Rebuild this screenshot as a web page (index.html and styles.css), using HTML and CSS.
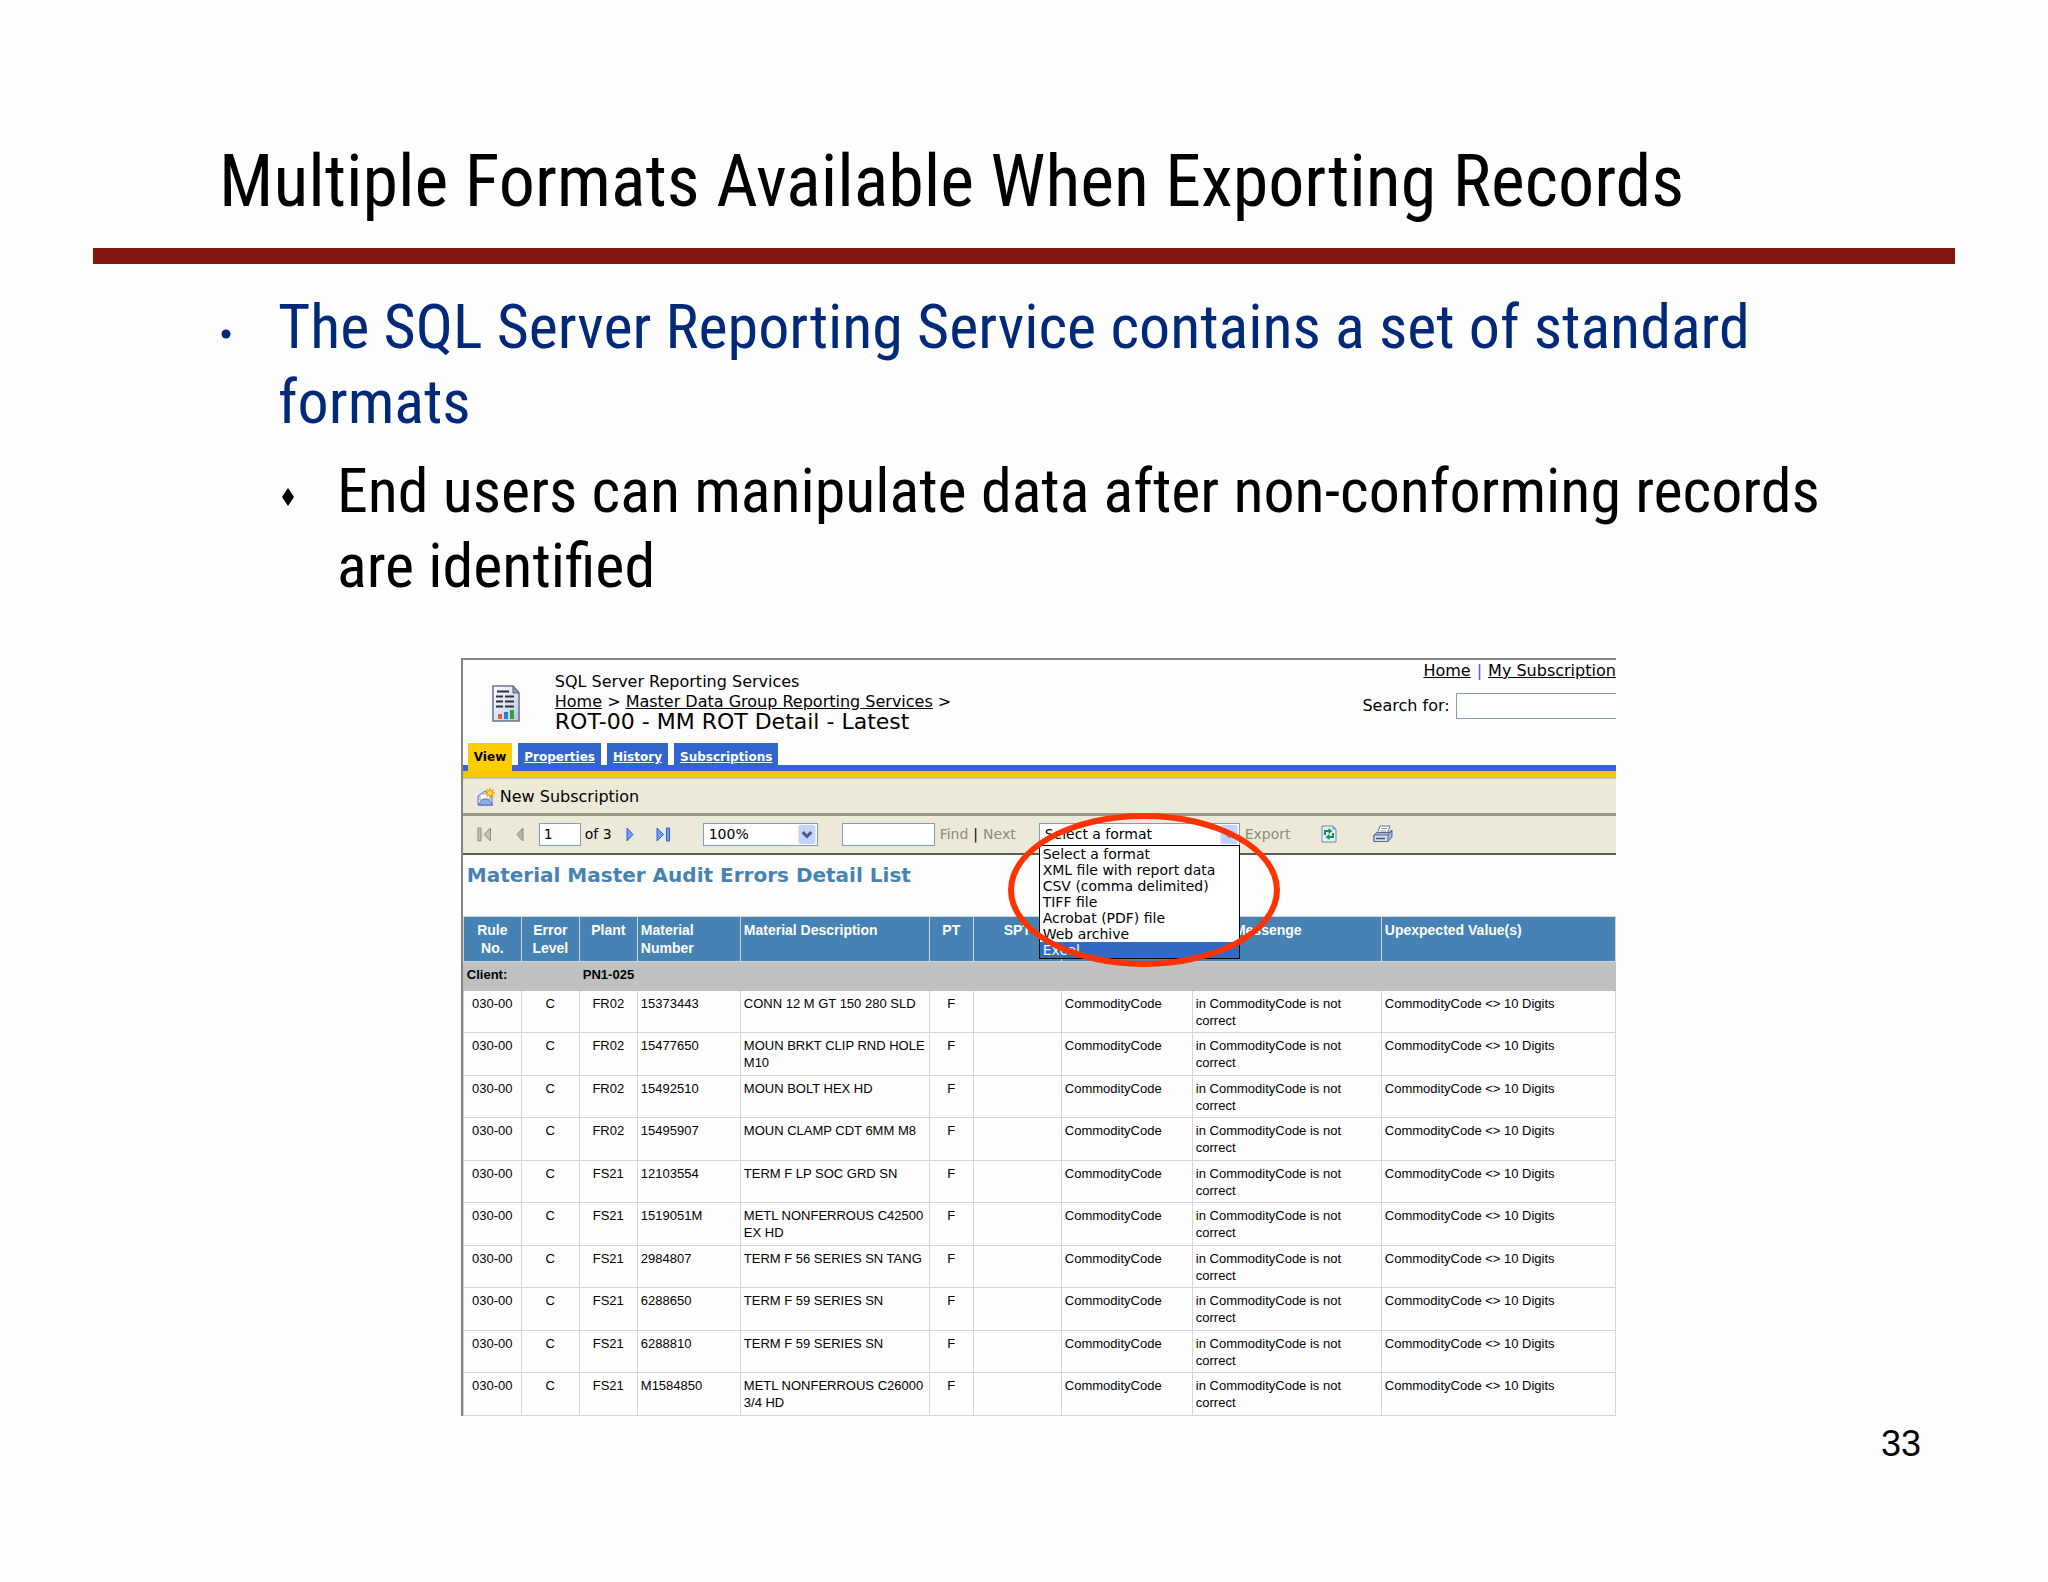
FILE: index.html
```
<!DOCTYPE html>
<html lang="en">
  <head>
    <meta charset="UTF-8" />
    <meta name="viewport" content="width=device-width, initial-scale=1.0" />
    <title>Multiple Formats Available When Exporting Records</title>
    <link rel="stylesheet" href="styles.css">
  </head>
  <body>
    <main class="slide">
      <h1 class="slide-title">Multiple Formats Available When Exporting Records</h1>
      <hr class="rule" />

      <ul class="points">
        <li class="point">
          <svg class="bullet" viewBox="0 0 12 18"><ellipse cx="6" cy="10" rx="4.500" ry="4.500" fill="#00297a" /></svg>
          <p>The SQL Server Reporting Service contains a set of standard formats</p>
        </li>
        <li class="point sub-point">
          <svg class="bullet" viewBox="0 0 12 18"><path d="M6 0L12 9L6 18L0 9Z" /></svg>
          <p>End users can manipulate data after non-conforming records are identified</p>
        </li>
      </ul>

      <section class="report">
        <header class="report-header">
          <svg class="report-icon" viewBox="0 0 28 37">
            <defs>
              <linearGradient id="page" x1="0" y1="0" x2="1" y2="1">
                <stop offset="0" stop-color="#fff" />
                <stop offset="1" stop-color="#b9c6e6" />
              </linearGradient>
            </defs>
            <path d="M1 1H21L27 8V36H1Z" fill="url(#page)" stroke="#6b7690" stroke-width="1.6" />
            <path d="M21 1V8H27Z" fill="#8d99b5" stroke="#59637c" />
            <path d="M5 6.500H17M4 11.500H11M13 11.500H22M4 16.500H11M13 16.500H22M4 21.500H11M13 21.500H22" stroke="#2b2f3a" stroke-width="2" />
            <path d="M6 29H10V34H6Z" fill="#e8622c" />
            <path d="M12 27H16V34H12Z" fill="#2a7fe0" />
            <path d="M18 25H22V34H18Z" fill="#2fa52f" />
          </svg>
          <div class="crumbs">
            <p>SQL Server Reporting Services</p>
            <p><a href="#">Home</a> &gt; <a href="#">Master Data Group Reporting Services</a> &gt;</p>
            <h2>ROT-00 - MM ROT Detail - Latest</h2>
          </div>
          <div class="header-side">
            <p class="header-links"><a href="#">Home</a><span class="bar">|</span><a href="#">My Subscription</a></p>
            <div class="search">
              <label for="search">Search for:</label>
              <input type="text" id="search" />
            </div>
          </div>
        </header>

        <nav class="tabs">
          <a href="#" class="tab active">View</a>
          <a href="#" class="tab">Properties</a>
          <a href="#" class="tab">History</a>
          <a href="#" class="tab">Subscriptions</a>
        </nav>

        <div class="action-bar">
          <button class="new-btn">
            <svg class="mail-icon" viewBox="0 0 18 18">
              <path d="M1 8L8 3L15 8V17H1Z" fill="#dbe8fa" stroke="#4a72b8" />
              <path d="M3 6H13V12H3Z" fill="#fff" stroke="#8da8d4" />
              <path d="M1 17L6 11H11L16 17Z" fill="#8db0e8" stroke="#4a72b8" />
              <path d="M13 0V10M8 5H18M9.500 1.500L16.500 8.500M16.500 1.500L9.500 8.500" stroke="#f5a300" stroke-width="1.600" />
              <circle cx="13" cy="5" r="2.500" fill="#ffe05a" stroke="#f5a300" />
            </svg>
            New Subscription
          </button>
        </div>

        <div class="toolbar">
          <div class="pager">
            <button aria-label="First page">
              <svg width="15" height="16" viewBox="0 0 15 16"><path d="M1 2H4V15H1ZM13.500 2V15L7 8.500Z" fill="#c2c2ba" stroke="#8a8a84" /></svg>
            </button>
            <button aria-label="Previous page">
              <svg width="8" height="16" viewBox="0 0 8 16"><path d="M7 2V15L1 8.500Z" fill="#b5b5ae" stroke="#8a8a84" /></svg>
            </button>
          </div>
          <div class="page-count">
            <input type="text" id="page-no" class="page-no" value="1" />
            <label for="page-no">of 3</label>
          </div>
          <div class="pager next">
            <button aria-label="Next page">
              <svg width="8" height="16" viewBox="0 0 8 16"><path d="M1 2V15L7 8.500Z" fill="#6da0f5" stroke="#2f62d0" /></svg>
            </button>
            <button aria-label="Last page">
              <svg width="15" height="16" viewBox="0 0 15 16"><path d="M1 2V15L7.500 8.500ZM10.500 2H13.500V15H10.500Z" fill="#6da0f5" stroke="#2f62d0" /></svg>
            </button>
          </div>
          <div class="drop zoom">
            <select aria-label="Zoom"><option>100%</option></select>
            <svg class="arrow" viewBox="0 0 18 20"><rect width="18" height="20" rx="2" fill="#c3d3fb" /><path d="M4.500 7.500L9 12L13.500 7.500" fill="none" stroke="#44597f" stroke-width="3" /></svg>
          </div>
          <div class="find">
            <input type="text" aria-label="Find text" />
            <button>Find</button>
            <span>|</span>
            <button>Next</button>
          </div>
          <div class="drop format">
            <select aria-label="Export format"><option>Select a format</option></select>
            <svg class="arrow" viewBox="0 0 18 20"><rect width="18" height="20" rx="2" fill="#c3d3fb" /><path d="M4.500 7.500L9 12L13.500 7.500" fill="none" stroke="#8497c4" stroke-width="3" /></svg>
            <ul class="menu">
              <li>Select a format</li>
              <li>XML file with report data</li>
              <li>CSV (comma delimited)</li>
              <li>TIFF file</li>
              <li>Acrobat (PDF) file</li>
              <li>Web archive</li>
              <li class="selected">Excel</li>
            </ul>
            <div class="ring"></div>
          </div>
          <button class="export">Export</button>
          <div class="tools">
            <button aria-label="Refresh">
              <svg width="16" height="18" viewBox="0 0 16 18">
                <path d="M1 1H12L15 4V17H1Z" fill="#e6eefb" stroke="#6b86b8" />
                <path d="M12 1V4H15" fill="none" stroke="#6b86b8" />
                <path d="M4 10V6H8M12 8V12H8" fill="none" stroke="#159447" stroke-width="2" />
                <path d="M7.500 3L11.500 6L7.500 9ZM8.500 9L4.500 12L8.500 15Z" fill="#159447" />
              </svg>
            </button>
            <button aria-label="Print">
              <svg width="20" height="18" viewBox="0 0 20 18">
                <path d="M7 1H17L14 9H4Z" fill="#fff" stroke="#66759c" />
                <path d="M8.500 3.500H14M7.500 6H13" stroke="#8795b8" />
                <path d="M1 10L4 7.500H16L19 5V12L15 16.500H1Z" fill="#a9b6d6" stroke="#55648c" />
                <path d="M1 10H15V16.500H1ZM15 10L19 6" fill="#d5ddf0" stroke="#55648c" />
                <path d="M3 13.500H12" stroke="#46547c" stroke-width="1.500" />
              </svg>
            </button>
          </div>
        </div>

        <h3 class="report-title">Material Master Audit Errors Detail List</h3>

        <table class="errors">
          <colgroup>
            <col class="w-small" /><col class="w-small" /><col class="w-small" />
            <col class="w-number" /><col class="w-desc" /><col class="w-pt" />
            <col class="w-spt" /><col class="w-field" /><col class="w-desc" /><col />
          </colgroup>
          <thead>
            <tr>
              <th class="mid">Rule<br />No.</th>
              <th class="mid">Error<br />Level</th>
              <th class="mid">Plant</th>
              <th>Material<br />Number</th>
              <th>Material Description</th>
              <th class="mid">PT</th>
              <th class="mid">SPT</th>
              <th></th>
              <th>Error Messenge</th>
              <th>Upexpected Value(s)</th>
            </tr>
          </thead>
          <tbody>
            <tr class="client">
              <td colspan="2">Client:</td>
              <td colspan="8">PN1-025</td>
            </tr>
            <tr>
              <td class="mid">030-00</td><td class="mid">C</td><td class="mid">FR02</td>
              <td>15373443</td><td>CONN 12 M GT 150 280 SLD</td><td class="mid">F</td><td></td>
              <td>CommodityCode</td><td>in CommodityCode is not correct</td><td>CommodityCode &lt;&gt; 10 Digits</td>
            </tr>
            <tr>
              <td class="mid">030-00</td><td class="mid">C</td><td class="mid">FR02</td>
              <td>15477650</td><td>MOUN BRKT CLIP RND HOLE M10</td><td class="mid">F</td><td></td>
              <td>CommodityCode</td><td>in CommodityCode is not correct</td><td>CommodityCode &lt;&gt; 10 Digits</td>
            </tr>
            <tr>
              <td class="mid">030-00</td><td class="mid">C</td><td class="mid">FR02</td>
              <td>15492510</td><td>MOUN BOLT HEX HD</td><td class="mid">F</td><td></td>
              <td>CommodityCode</td><td>in CommodityCode is not correct</td><td>CommodityCode &lt;&gt; 10 Digits</td>
            </tr>
            <tr>
              <td class="mid">030-00</td><td class="mid">C</td><td class="mid">FR02</td>
              <td>15495907</td><td>MOUN CLAMP CDT 6MM M8</td><td class="mid">F</td><td></td>
              <td>CommodityCode</td><td>in CommodityCode is not correct</td><td>CommodityCode &lt;&gt; 10 Digits</td>
            </tr>
            <tr>
              <td class="mid">030-00</td><td class="mid">C</td><td class="mid">FS21</td>
              <td>12103554</td><td>TERM F LP SOC GRD SN</td><td class="mid">F</td><td></td>
              <td>CommodityCode</td><td>in CommodityCode is not correct</td><td>CommodityCode &lt;&gt; 10 Digits</td>
            </tr>
            <tr>
              <td class="mid">030-00</td><td class="mid">C</td><td class="mid">FS21</td>
              <td>1519051M</td><td>METL NONFERROUS C42500 EX HD</td><td class="mid">F</td><td></td>
              <td>CommodityCode</td><td>in CommodityCode is not correct</td><td>CommodityCode &lt;&gt; 10 Digits</td>
            </tr>
            <tr>
              <td class="mid">030-00</td><td class="mid">C</td><td class="mid">FS21</td>
              <td>2984807</td><td>TERM F 56 SERIES SN TANG</td><td class="mid">F</td><td></td>
              <td>CommodityCode</td><td>in CommodityCode is not correct</td><td>CommodityCode &lt;&gt; 10 Digits</td>
            </tr>
            <tr>
              <td class="mid">030-00</td><td class="mid">C</td><td class="mid">FS21</td>
              <td>6288650</td><td>TERM F 59 SERIES SN</td><td class="mid">F</td><td></td>
              <td>CommodityCode</td><td>in CommodityCode is not correct</td><td>CommodityCode &lt;&gt; 10 Digits</td>
            </tr>
            <tr>
              <td class="mid">030-00</td><td class="mid">C</td><td class="mid">FS21</td>
              <td>6288810</td><td>TERM F 59 SERIES SN</td><td class="mid">F</td><td></td>
              <td>CommodityCode</td><td>in CommodityCode is not correct</td><td>CommodityCode &lt;&gt; 10 Digits</td>
            </tr>
            <tr>
              <td class="mid">030-00</td><td class="mid">C</td><td class="mid">FS21</td>
              <td>M1584850</td><td>METL NONFERROUS C26000 3/4 HD</td><td class="mid">F</td><td></td>
              <td>CommodityCode</td><td>in CommodityCode is not correct</td><td>CommodityCode &lt;&gt; 10 Digits</td>
            </tr>
          </tbody>
        </table>
      </section>

      <footer class="page-number">33</footer>
    </main>
  </body>
</html>
```
FILE: styles.css
```
* {
  box-sizing: border-box;
}
body {
  margin: 0;
  background-color: #fefefe;
  color: #000;
  font-family: "Liberation Sans", Arial, sans-serif;
}
h1, h2, h3, p, ul {
  margin: 0;
  padding: 0;
  font-weight: normal;
}
ul {
  list-style: none;
}
a {
  color: inherit;
}
button {
  padding: 0;
  border: none;
  background: none;
  font: inherit;
  color: inherit;
  cursor: pointer;
}
svg {
  display: block;
  flex: none;
}

/* slide */
.slide {
  padding-top: 140px;
}
.slide-title {
  margin-left: 219px;
  font-family: "Roboto Condensed", "Arial Narrow", sans-serif;
  font-size: 72px;
  line-height: 84px;
}
.rule {
  height: 16px;
  margin: 24px 93px 25px;
  border: none;
  background-color: #84160d;
}
.points {
  display: flex;
  flex-direction: column;
  gap: 14px;
  margin: 0 200px 0 220px;
  font-family: "Roboto Condensed", "Arial Narrow", sans-serif;
  font-size: 62px;
  line-height: 75px;
}
.point {
  display: flex;
  gap: 46px;
  color: #00297a;
}
.sub-point {
  margin-left: 62px;
  gap: 43px;
  color: #000;
}
.bullet {
  width: 12px;
  height: 18px;
  margin-top: 35px;
}

/* report window */
.report {
  margin: 55px 21.1% 0 22.5%;
  border-top: 2px solid #848484;
  border-left: 2px solid #848484;
  font-family: "DejaVu Sans", Verdana, sans-serif;
  font-size: 16px;
  line-height: 20px;
}
.report-header {
  display: flex;
  height: 83px;
  padding-left: 29px;
}
.report-icon {
  width: 28px;
  height: 37px;
  margin-top: 25px;
}
.crumbs {
  flex: 1;
  padding: 12px 0 0 35px;
}
.crumbs h2 {
  font-size: 22px;
}
.header-side {
  display: flex;
  flex-direction: column;
  gap: 12px;
  padding-top: 1px;
}
.header-links {
  padding-left: 61px;
}
.bar {
  margin: 0 6px;
  color: #3366cc;
}
.search {
  display: flex;
  align-items: center;
  gap: 6px;
}
.search input {
  flex: 1;
  width: 100px;
  height: 26px;
  border: 1px solid #7f9db9;
  border-right: none;
  background: #fff;
}
.tabs {
  display: flex;
  gap: 6px;
  height: 28px;
  padding-left: 5px;
  border-bottom: 6px solid #3366cc;
}
.tab {
  height: 22px;
  padding: 4px 6px 0;
  background-color: #3366cc;
  color: #fff;
  font-size: 12px;
  font-weight: bold;
}
.tab.active {
  height: 28px;
  background-color: #ffcc00;
  color: #000;
  text-decoration: none;
}
.action-bar {
  height: 45px;
  padding: 10px 14px 0;
  border-top: 6px solid #f5c60c;
  border-bottom: 3px solid #9a988b;
  background-color: #ece9d8;
  box-shadow: inset 0 2px #c4bfa8;
}
.new-btn {
  display: flex;
  align-items: center;
  gap: 5px;
  line-height: 20px;
}
.mail-icon {
  width: 18px;
  height: 18px;
}
.toolbar {
  display: flex;
  align-items: center;
  height: 39px;
  padding: 0 0 1px 14px;
  border-bottom: 2px solid #5c5c50;
  background-color: #ece9d8;
  font-size: 14px;
}
.toolbar input,
.toolbar select {
  height: 23px;
  border: 1px solid #7f9db9;
  background: #fff;
  color: #000;
  font: inherit;
}
.pager {
  display: flex;
  gap: 24px;
}
.next {
  gap: 22px;
}
.page-count {
  display: flex;
  align-items: center;
  gap: 4px;
  margin: 0 14px 0 15px;
}
.toolbar .page-no {
  width: 42px;
  padding: 0 4px;
}
.drop {
  position: relative;
}
.drop select {
  display: block;
  width: 100%;
  padding: 0 5px;
  appearance: none;
}
.arrow {
  position: absolute;
  top: 2px;
  right: 2px;
  width: 18px;
  height: 19px;
}
.zoom {
  width: 115px;
  margin: 0 24px 0 32px;
}
.find {
  display: flex;
  align-items: center;
  gap: 5px;
}
.find input {
  width: 93px;
}
.find button,
.export {
  color: #8c8a80;
}
.format {
  width: 201px;
  margin: 0 5px 0 23px;
}
.menu {
  position: absolute;
  top: 22px;
  left: 0;
  right: 0;
  border: 1px solid #000;
  background: #fff;
  line-height: 16px;
}
.menu li {
  padding-left: 3px;
}
.menu .selected {
  background-color: #316ac5;
  color: #fff;
}
/* red highlight around the export list */
.ring {
  position: absolute;
  top: -10px;
  left: -31px;
  width: 272px;
  height: 154px;
  border: 6px solid #ff3300;
  border-radius: 50%;
  pointer-events: none;
}
.tools {
  display: flex;
  gap: 36px;
  margin-left: 30px;
}
.report-title {
  padding: 7px 4px 28px;
  color: #4682b4;
  font-size: 20px;
  font-weight: bold;
  line-height: 26px;
}

/* error list */
.errors {
  width: 100%;
  table-layout: fixed;
  border-collapse: collapse;
  font-family: "Liberation Sans", Arial, sans-serif;
  font-size: 13px;
  line-height: 17px;
}
.w-small {
  width: 58px;
}
.w-number {
  width: 103px;
}
.w-desc {
  width: 189px;
}
.w-pt {
  width: 44px;
}
.w-spt {
  width: 88px;
}
.w-field {
  width: 131px;
}
.errors th,
.errors td {
  height: 43px;
  padding: 4px 3px 3px;
  border: 1px solid #d3d3d3;
  text-align: left;
  vertical-align: top;
}
.errors tr:nth-child(even) td {
  height: 42px;
}
.errors th {
  height: 45px;
  background-color: #4682b4;
  color: #fff;
  font-size: 14px;
  line-height: 18px;
}
.errors .mid {
  text-align: center;
}
.errors .client td {
  height: 29px;
  border-color: #c0c0c0;
  background-color: #c0c0c0;
  font-weight: bold;
}

.page-number {
  margin-right: 127px;
  padding: 8px 0 100px;
  font-size: 36px;
  line-height: 40px;
  text-align: right;
}
```
